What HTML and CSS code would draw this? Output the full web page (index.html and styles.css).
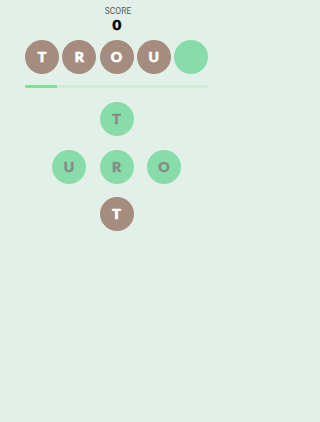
FILE: index.html
```html
<!DOCTYPE html>
<html>
<head>
<meta charset="utf-8">
<link rel="stylesheet" href="styles.css">
</head>
<body>
<div class="app">
  <div class="label">SCORE</div>
  <div class="score">0</div>
  <div class="row">
    <div class="tile brown">T</div>
    <div class="tile brown">R</div>
    <div class="tile brown">O</div>
    <div class="tile brown">U</div>
    <div class="tile green"></div>
  </div>
  <div class="bar"><div class="fill" style="width:17.5%"></div></div>
  <div class="grid">
    <div class="cell"></div>
    <div class="tile green">T</div>
    <div class="cell"></div>
    <div class="tile green">U</div>
    <div class="tile green">R</div>
    <div class="tile green">O</div>
    <div class="cell"></div>
    <div class="tile brown">T</div>
    <div class="cell"></div>
  </div>
</div>
</body>
</html>
```
FILE: styles.css
```css
html, body {
  margin: 0;
  padding: 0;
  background: #e3efe9;
  height: 100%;
}
.app {
  width: 183px;
  margin-left: 25px;
  padding-top: 6px;
  display: flex;
  flex-direction: column;
  align-items: center;
  font-family: "Lato", "Roboto", sans-serif;
}
.label {
  padding-left: 3px;
  font-family: "Roboto", "Liberation Sans", sans-serif;
  font-size: 8.5px;
  line-height: 10px;
  color: #555a58;
}
.score {
  margin-top: 3px;
  padding-left: 1px;
  font-size: 12.5px;
  line-height: 13px;
  font-weight: 900;
  color: #000;
  transform: scaleX(1.2);
  -webkit-text-stroke: 0.5px #000;
}
.row {
  margin-top: 8px;
  display: flex;
  gap: 3.25px;
  width: 183px;
}
.tile {
  width: 34px;
  height: 34px;
  border-radius: 50%;
  display: flex;
  align-items: center;
  justify-content: center;
  font-size: 14px;
  font-weight: 900;
  line-height: 1;
}
.brown {
  background: #a58c7e;
  color: #ffffff;
  -webkit-text-stroke: 0.7px #ffffff;
}
.green {
  background: #88dcaa;
  color: #868b87;
  font-size: 14px;
  -webkit-text-stroke: 0.5px #868b87;
}
.bar {
  margin-top: 11px;
  width: 183px;
  height: 3px;
  background: #cdeed7;
  border-radius: 2px;
  overflow: hidden;
}
.fill {
  height: 100%;
  background: #7fe193;
}
.grid {
  margin-top: 14px;
  display: grid;
  grid-template-columns: repeat(3, 34px);
  grid-auto-rows: 34px;
  column-gap: 13.5px;
  row-gap: 13.5px;
}
.cell {
  width: 34px;
  height: 34px;
}
```
